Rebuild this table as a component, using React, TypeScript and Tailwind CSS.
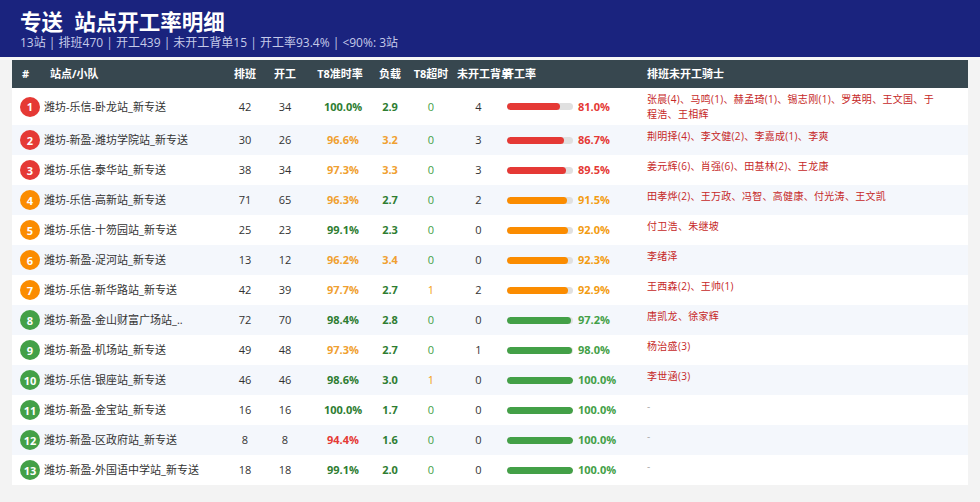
import React from 'react';

interface StationRow {
  name: string;
  plan: number;
  started: number;
  onTime: number;
  load: number;
  overtime: number;
  backlog: number;
  rate: number;
  riders: string;
}

const rows: StationRow[] = [
  { name: '潍坊-乐信-卧龙站_新专送', plan: 42, started: 34, onTime: 100.0, load: 2.9, overtime: 0, backlog: 4, rate: 81.0, riders: '张晨(4)、马鸣(1)、赫孟琦(1)、锡志刚(1)、罗英明、王文国、于程浩、王相辉' },
  { name: '潍坊-新盈-潍坊学院站_新专送', plan: 30, started: 26, onTime: 96.6, load: 3.2, overtime: 0, backlog: 3, rate: 86.7, riders: '荆明择(4)、李文健(2)、李嘉成(1)、李爽' },
  { name: '潍坊-乐信-泰华站_新专送', plan: 38, started: 34, onTime: 97.3, load: 3.3, overtime: 0, backlog: 3, rate: 89.5, riders: '姜元辉(6)、肖强(6)、田基林(2)、王龙康' },
  { name: '潍坊-乐信-高新站_新专送', plan: 71, started: 65, onTime: 96.3, load: 2.7, overtime: 0, backlog: 2, rate: 91.5, riders: '田孝烨(2)、王万政、冯智、高健康、付光涛、王文凯' },
  { name: '潍坊-乐信-十笏园站_新专送', plan: 25, started: 23, onTime: 99.1, load: 2.3, overtime: 0, backlog: 0, rate: 92.0, riders: '付卫浩、朱继坡' },
  { name: '潍坊-新盈-浞河站_新专送', plan: 13, started: 12, onTime: 96.2, load: 3.4, overtime: 0, backlog: 0, rate: 92.3, riders: '李绪泽' },
  { name: '潍坊-乐信-新华路站_新专送', plan: 42, started: 39, onTime: 97.7, load: 2.7, overtime: 1, backlog: 2, rate: 92.9, riders: '王西森(2)、王帅(1)' },
  { name: '潍坊-新盈-金山财富广场站_..', plan: 72, started: 70, onTime: 98.4, load: 2.8, overtime: 0, backlog: 0, rate: 97.2, riders: '唐凯龙、徐家辉' },
  { name: '潍坊-新盈-机场站_新专送', plan: 49, started: 48, onTime: 97.3, load: 2.7, overtime: 0, backlog: 1, rate: 98.0, riders: '杨治盛(3)' },
  { name: '潍坊-乐信-银座站_新专送', plan: 46, started: 46, onTime: 98.6, load: 3.0, overtime: 1, backlog: 0, rate: 100.0, riders: '李世涵(3)' },
  { name: '潍坊-新盈-金宝站_新专送', plan: 16, started: 16, onTime: 100.0, load: 1.7, overtime: 0, backlog: 0, rate: 100.0, riders: '' },
  { name: '潍坊-新盈-区政府站_新专送', plan: 8, started: 8, onTime: 94.4, load: 1.6, overtime: 0, backlog: 0, rate: 100.0, riders: '' },
  { name: '潍坊-新盈-外国语中学站_新专送', plan: 18, started: 18, onTime: 99.1, load: 2.0, overtime: 0, backlog: 0, rate: 100.0, riders: '' },
];

function badgeColor(rank: number) {
  if (rank <= 3) return 'bg-[#e53935]';
  if (rank <= 7) return 'bg-[#fb8c00]';
  return 'bg-[#43a047]';
}

function onTimeColor(v: number) {
  if (v >= 98) return 'text-[#2e7d32]';
  if (v >= 95) return 'text-[#f0a030]';
  return 'text-[#e53935]';
}

function rateStyle(v: number) {
  if (v < 90) return { bar: 'bg-[#e53935]', text: 'text-[#e53935]' };
  if (v < 95) return { bar: 'bg-[#fb8c00]', text: 'text-[#f39c12]' };
  return { bar: 'bg-[#43a047]', text: 'text-[#43a047]' };
}

export default function App() {
  return (
    <div className="min-h-[502px] w-[980px] bg-[#f3f3f3] font-['Open_Sans','Noto_Sans_CJK_SC',sans-serif]">
      {/* Header */}
      <div className="h-[57px] bg-[#1a237e] px-[20px] pt-[9px]">
        <h1 className="h-[26px] text-[21.5px] font-bold leading-[26px] text-white">
          专送&nbsp;&nbsp;站点开工率明细
        </h1>
        <p className="h-[16px] text-[12px] leading-[16px] text-[#c5cae9]">
          13站 | 排班470 | 开工439 | 未开工背单15 | 开工率93.4% | &lt;90%: 3站
        </p>
      </div>

      <div className="h-[3px] bg-[#f7f7f7]" />

      {/* Table */}
      <div className="mx-[12px]">
        <table className="w-full table-fixed border-collapse">
          <colgroup>
            <col className="w-[30px]" />
            <col className="w-[183px]" />
            <col className="w-[40px]" />
            <col className="w-[40px]" />
            <col className="w-[70px]" />
            <col className="w-[30px]" />
            <col className="w-[52px]" />
            <col className="w-[43px]" />
            <col className="w-[140px]" />
            <col />
          </colgroup>
          <thead>
            <tr className="h-[28px] bg-[#37474f] text-[11px] font-bold leading-[16px] text-white">
              <th className="p-0 pl-[10px] text-left font-bold">#</th>
              <th className="p-0 pl-[8px] text-left font-bold">站点/小队</th>
              <th className="p-0 text-center font-bold">排班</th>
              <th className="p-0 text-center font-bold">开工</th>
              <th className="p-0 text-center font-bold">T8准时率</th>
              <th className="p-0 text-center font-bold">负载</th>
              <th className="p-0 text-center font-bold">T8超时</th>
              <th className="overflow-visible whitespace-nowrap p-0 text-center font-bold">未开工背单</th>
              <th className="p-0 pl-[3px] text-left font-bold">开工率</th>
              <th className="p-0 pl-[7px] text-left font-bold">排班未开工骑士</th>
            </tr>
          </thead>
          <tbody>
            {rows.map((r, i) => {
              const rank = i + 1;
              const rs = rateStyle(r.rate);
              return (
                <tr
                  key={r.name}
                  className={`h-[30px] text-[11px] leading-[16px] text-[#333] ${i % 2 === 1 ? 'bg-[#f4f7fc]' : 'bg-white'}`}
                >
                  <td className="p-0 pl-[8px] align-middle">
                    <span
                      className={`flex h-[20px] w-[20px] items-center justify-center rounded-full text-[11px] font-bold leading-none text-white ${badgeColor(rank)}`}
                    >
                      {rank}
                    </span>
                  </td>
                  <td className="truncate p-0 pl-[2px] align-middle">{r.name}</td>
                  <td className="p-0 text-center align-middle">{r.plan}</td>
                  <td className="p-0 text-center align-middle">{r.started}</td>
                  <td className={`p-0 pl-[6px] text-center align-middle font-bold ${onTimeColor(r.onTime)}`}>
                    {r.onTime.toFixed(1)}%
                  </td>
                  <td
                    className={`p-0 text-center align-middle font-bold ${r.load > 3 ? 'text-[#f0a030]' : 'text-[#2e7d32]'}`}
                  >
                    {r.load.toFixed(1)}
                  </td>
                  <td
                    className={`p-0 text-center align-middle ${r.overtime > 0 ? 'text-[#f39c12]' : 'text-[#43a047]'}`}
                  >
                    {r.overtime}
                  </td>
                  <td className="p-0 text-center align-middle">{r.backlog}</td>
                  <td className="p-0 pl-[7px] align-middle">
                    <div className="flex items-center">
                      <div className="h-[7px] w-[66px] overflow-hidden rounded-full bg-[#e0e0e0]">
                        <div className={`h-full rounded-full ${rs.bar}`} style={{ width: `${r.rate}%` }} />
                      </div>
                      <span className={`ml-[5px] font-bold ${rs.text}`}>{r.rate.toFixed(1)}%</span>
                    </div>
                  </td>
                  <td className="p-0 pb-[3px] pl-[7px] pr-[30px] pt-[4px] align-top text-[10px] leading-[15px] tracking-[0.3px]">
                    {r.riders ? (
                      <span className="text-[#c62828]">{r.riders}</span>
                    ) : (
                      <span className="text-[#aaa]">-</span>
                    )}
                  </td>
                </tr>
              );
            })}
          </tbody>
        </table>
      </div>
    </div>
  );
}
